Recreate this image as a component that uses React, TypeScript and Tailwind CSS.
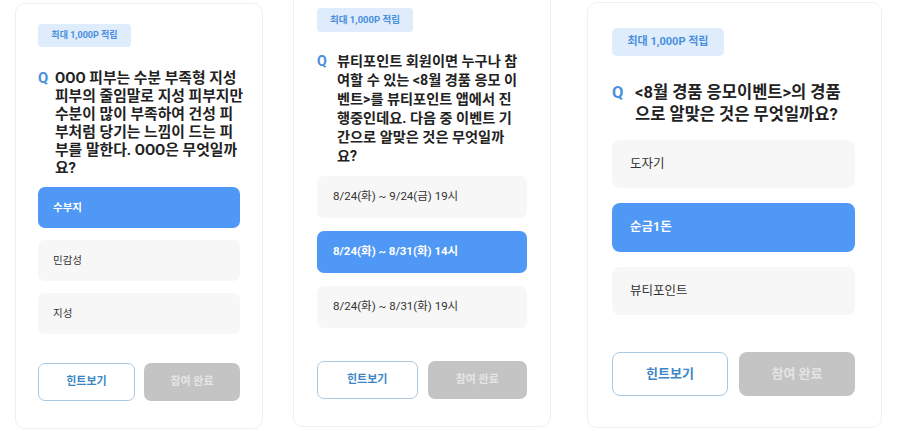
import React from "react";

const FONT = { fontFamily: 'Roboto, "Noto Sans CJK KR", "Noto Sans", sans-serif' };

export default function App() {
  return (
    <div className="w-[900px] h-[431px] overflow-hidden bg-white flex items-start" style={FONT}>
      {/* Card 1 */}
      <div className="ml-[15px] mt-[3px] w-[248px] h-[426px] shrink-0 rounded-[10px] border border-[#f0f0f0] pl-[22px] pr-[22px] pt-[20px] flex flex-col">
        <div className="w-[93px] h-[23px] rounded-[4px] bg-[#deecfc] text-[#4a8fdc] text-[9px] font-bold flex items-center justify-center">
          최대 1,000P 적립
        </div>
        <div className="mt-[22px] flex text-[14.8px] leading-[18px] font-bold">
          <span className="w-[17px] shrink-0 text-[#4a8fdc]">Q</span>
          <span className="text-[#222222] whitespace-nowrap">
            OOO 피부는 수분 부족형 지성<br />
            피부의 줄임말로 지성 피부지만<br />
            수분이 많이 부족하여 건성 피<br />
            부처럼 당기는 느낌이 드는 피<br />
            부를 말한다. OOO은 무엇일까<br />
            요?
          </span>
        </div>
        <div className="mt-[10px] flex flex-col gap-[12px] text-[10.5px]">
          <div className="h-[41px] rounded-[7px] bg-[#4f98f5] text-white font-bold flex items-center pl-[15px]">수부지</div>
          <div className="h-[41px] rounded-[7px] bg-[#f7f7f7] text-[#333333] flex items-center pl-[15px]">민감성</div>
          <div className="h-[41px] rounded-[7px] bg-[#f7f7f7] text-[#333333] flex items-center pl-[15px]">지성</div>
        </div>
        <div className="mt-[29px] flex gap-[9px]">
          <div className="w-[97px] h-[38px] rounded-[7px] border border-[#a9c9e2] text-[#3d86c6] text-[11px] font-bold flex items-center justify-center">힌트보기</div>
          <div className="w-[96px] h-[38px] rounded-[7px] bg-[#c4c4c4] text-[#e4e4e4] text-[11px] font-bold flex items-center justify-center">참여 완료</div>
        </div>
      </div>

      {/* Card 2 */}
      <div className="ml-[30px] -mt-[10px] w-[258px] h-[437px] shrink-0 rounded-[10px] border border-[#f0f0f0] pl-[23px] pr-[23px] pt-[17px] flex flex-col">
        <div className="w-[96px] h-[24px] rounded-[4px] bg-[#deecfc] text-[#4a8fdc] text-[9.5px] font-bold flex items-center justify-center">
          최대 1,000P 적립
        </div>
        <div className="mt-[20px] flex text-[14.2px] leading-[19px] font-bold">
          <span className="w-[20px] shrink-0 text-[#4a8fdc]">Q</span>
          <span className="text-[#222222] whitespace-nowrap">
            뷰티포인트 회원이면 누구나 참<br />
            여할 수 있는 &lt;8월 경품 응모 이<br />
            벤트&gt;를 뷰티포인트 앱에서 진<br />
            행중인데요. 다음 중 이벤트 기<br />
            간으로 알맞은 것은 무엇일까<br />
            요?
          </span>
        </div>
        <div className="mt-[10px] flex flex-col gap-[13px] text-[11.5px]">
          <div className="h-[42px] rounded-[7px] bg-[#f7f7f7] text-[#333333] flex items-center pl-[16px]">8/24(화) ~ 9/24(금) 19시</div>
          <div className="h-[42px] rounded-[7px] bg-[#4f98f5] text-white font-bold flex items-center pl-[16px]">8/24(화) ~ 8/31(화) 14시</div>
          <div className="h-[42px] rounded-[7px] bg-[#f7f7f7] text-[#333333] flex items-center pl-[16px]">8/24(화) ~ 8/31(화) 19시</div>
        </div>
        <div className="mt-[33px] flex gap-[10px]">
          <div className="w-[101px] h-[38px] rounded-[7px] border border-[#a9c9e2] text-[#3d86c6] text-[11px] font-bold flex items-center justify-center">힌트보기</div>
          <div className="w-[100px] h-[38px] rounded-[7px] bg-[#c4c4c4] text-[#e4e4e4] text-[11px] font-bold flex items-center justify-center">참여 완료</div>
        </div>
      </div>

      {/* Card 3 */}
      <div className="ml-[36px] mt-[2px] w-[295px] h-[426px] shrink-0 rounded-[10px] border border-[#f0f0f0] pl-[24px] pr-[26px] pt-[25px] flex flex-col">
        <div className="w-[112px] h-[28px] rounded-[5px] bg-[#deecfc] text-[#4a8fdc] text-[11px] font-bold flex items-center justify-center">
          최대 1,000P 적립
        </div>
        <div className="mt-[26px] flex text-[16.5px] leading-[22px] font-bold">
          <span className="w-[23px] shrink-0 text-[#4a8fdc]">Q</span>
          <span className="text-[#222222] whitespace-nowrap">
            &lt;8월 경품 응모이벤트&gt;의 경품<br />
            으로 알맞은 것은 무엇일까요?
          </span>
        </div>
        <div className="mt-[14px] flex flex-col gap-[15px] text-[12.5px]">
          <div className="h-[48px] rounded-[8px] bg-[#f7f7f7] text-[#333333] flex items-center pl-[18px]">도자기</div>
          <div className="h-[49px] rounded-[8px] bg-[#4f98f5] text-white font-bold flex items-center pl-[18px]">순금1돈</div>
          <div className="h-[48px] rounded-[8px] bg-[#f7f7f7] text-[#333333] flex items-center pl-[18px]">뷰티포인트</div>
        </div>
        <div className="mt-[37px] flex gap-[11px]">
          <div className="w-[116px] h-[44px] rounded-[8px] border border-[#a9c9e2] text-[#3d86c6] text-[13px] font-bold flex items-center justify-center">힌트보기</div>
          <div className="w-[116px] h-[44px] rounded-[8px] bg-[#c4c4c4] text-[#e4e4e4] text-[13px] font-bold flex items-center justify-center">참여 완료</div>
        </div>
      </div>
    </div>
  );
}
